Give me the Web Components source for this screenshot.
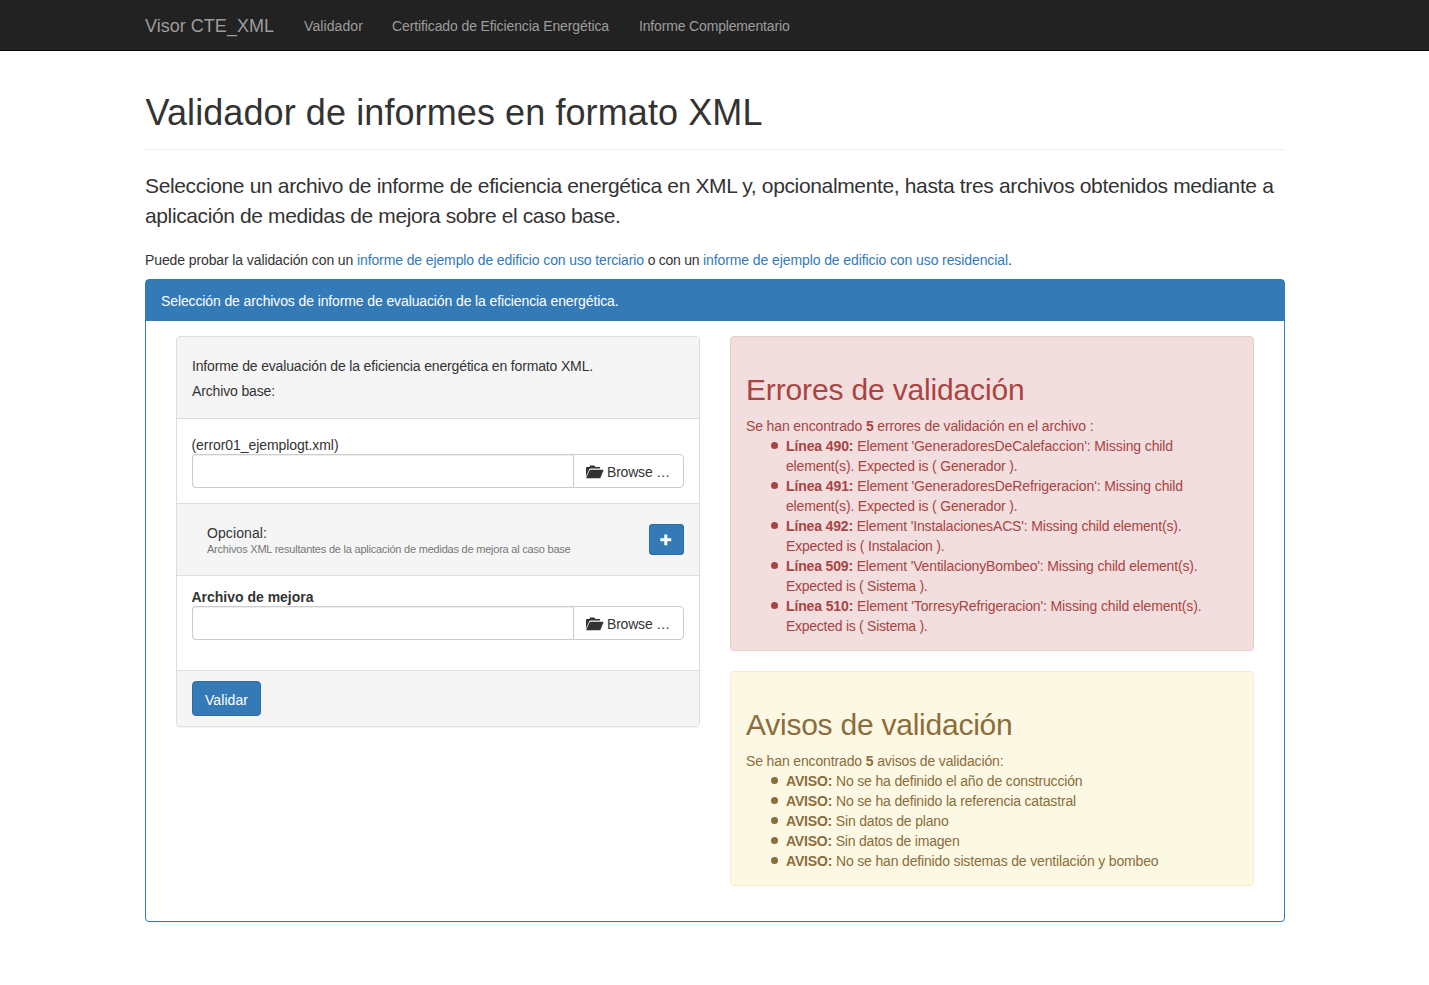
<!DOCTYPE html>
<html lang="es">
<head>
<meta charset="utf-8">
<title>Visor CTE_XML</title>
<style>
body{margin:0;background:#fff;color:#333;font:14px/20px "Liberation Sans",Arial,sans-serif}
</style>
</head>
<body>
<visor-app></visor-app>
<script>
const define=(name,html,init)=>customElements.define(name,class extends HTMLElement{
  constructor(){super();const t=document.createElement('template');t.innerHTML=html;
    this.attachShadow({mode:'open'}).append(t.content.cloneNode(true));}
  connectedCallback(){if(init)init(this,this.shadowRoot);}
});

/* One line of text, tracked so that it takes the width w */
define('text-line',`<style>:host{display:inline-block;white-space:pre;vertical-align:top}</style><slot></slot>`,
(el)=>{
  const w=parseFloat(el.getAttribute('w'));
  if(!w)return;
  el.style.letterSpacing='0';
  const nat=el.getBoundingClientRect().width;
  if(nat)el.style.letterSpacing=((w-nat)/el.textContent.length).toFixed(4)+'px';
});

define('nav-bar',`<style>
:host{display:block;background:#222;border-bottom:1px solid #080808;height:50px;color:#9d9d9d}
nav{width:1139px;margin:0 auto;display:flex;height:50px;align-items:flex-start;padding-top:16px;box-sizing:border-box}
.brand{font-size:18px;margin-right:30px}
.item{margin-right:29px}
</style><nav>
<text-line class="brand" w="129">Visor CTE_XML</text-line>
<text-line class="item" w="59">Validador</text-line>
<text-line class="item" w="217" style="margin-right:30px">Certificado de Eficiencia Energética</text-line>
<text-line w="150.5">Informe Complementario</text-line>
</nav>`);

define('page-title',`<style>
:host{display:block;padding-bottom:16px;margin:42.4px 0 21px;border-bottom:1px solid #eee}
h1{margin:0 0 0 1px;font-size:36px;line-height:39.6px;font-weight:400}
</style><h1><slot></slot></h1>`);

define('folder-icon',`<style>:host{display:block;width:18px;height:14px}svg{display:block}</style>
<svg width="18" height="14" viewBox="0 0 18 14"><path fill="#333" d="M0 11.5V2.6Q0 2 .7 2H3.2L4 .8Q4.2.5 4.8.5H8Q8.5.5 8.8 1L9.3 2H13.4Q14.2 2 14.2 2.8V3.6H4.6Q3.6 3.6 3.2 4.5ZM4.8 4.7H17Q17.8 4.7 17.4 5.5L14.6 12.5Q14.3 13.2 13.5 13.2H.6Q0 13.2.3 12.4L3.5 5.5Q3.9 4.7 4.8 4.7Z"/></svg>`);

define('file-input',`<style>
:host{display:flex;height:34px}
.field{flex:1;border:1px solid #ccc;border-right:0;border-radius:4px 0 0 4px;box-shadow:inset 0 1px 1px rgba(0,0,0,.075)}
.btn{box-sizing:border-box;width:111px;border:1px solid #ccc;border-radius:0 4px 4px 0;display:flex;padding:7px 0 0 12px}
folder-icon{margin:3px 3.5px 0 0}
</style><div class="field"></div><div class="btn"><folder-icon></folder-icon><text-line w="63">Browse …</text-line></div>`);

define('upload-panel',`<style>
:host{display:block;box-sizing:border-box;border:1px solid #ddd;border-radius:4px;height:391px;box-shadow:0 1px 1px rgba(0,0,0,.05);overflow:hidden}
.grey{background:#f5f5f5;box-sizing:border-box}
.head{height:82px;border-bottom:1px solid #ddd;padding:19px 15px 0 15.5px}
.line{height:25px;display:flex}
.file{box-sizing:border-box;height:84px;padding:15px 15px 0}
.file .lab{height:20px;display:flex;padding-top:1px;box-sizing:border-box}
.opt{height:73px;border:solid #ddd;border-width:1px 0;padding:20px 15px 0 30.5px;display:flex;justify-content:space-between}
.opt .txt{display:flex;flex-direction:column;align-items:flex-start;margin-top:-1px}
.small{font-size:11px;line-height:14px;color:#777;margin-top:-1px}
.plus{box-sizing:border-box;width:35px;height:31px;background:#337ab7;border:1px solid #2e6da4;border-radius:3px;display:flex;align-items:center;justify-content:center}
.plus svg{margin-top:1px}
.better{box-sizing:border-box;height:94px;padding:11px 15px 0}
.better .lab{height:19px;display:flex;font-weight:700}
.foot{height:57px;border-top:1px solid #ddd;padding:10px 15px}
.go{box-sizing:border-box;width:69px;height:35px;background:#337ab7;border:1px solid #2e6da4;border-radius:4px;color:#fff;padding:8px 0 0 12.5px}
</style>
<div class="grey head"><div class="line"><text-line w="401">Informe de evaluación de la eficiencia energética en formato XML.</text-line></div><div class="line"><text-line w="83">Archivo base:</text-line></div></div>
<div class="file"><div class="lab"><text-line w="147">(error01_ejemplogt.xml)</text-line></div><file-input></file-input></div>
<div class="grey opt"><div class="txt"><text-line w="60">Opcional:</text-line><text-line class="small" w="363.5">Archivos XML resultantes de la aplicación de medidas de mejora al caso base</text-line></div>
<div class="plus"><svg width="12" height="12" viewBox="0 0 12 12"><path fill="#fff" d="M4.3.5H7.3V4.3H11.3V7.3H7.3V11.3H4.3V7.3H.3V4.3H4.3Z"/></svg></div></div>
<div class="better"><div class="lab"><text-line w="122">Archivo de mejora</text-line></div><file-input></file-input></div>
<div class="grey foot"><div class="go"><text-line w="43">Validar</text-line></div></div>`);

define('alert-box',`<style>
:host{display:block;box-sizing:border-box;border:1px solid #ebccd1;background:#f2dede;color:#a94442;border-radius:4px;padding:16px 15px 14px 15.5px;margin-bottom:20px}
:host([kind=warning]){border-color:#faebcc;background:#fcf8e3;color:#8a6d3b}
h2{margin:20px 0 10px;font-size:30px;line-height:33px;font-weight:400}
ul{margin:0;padding:0 0 0 40px;list-style:none}
</style><h2><slot name="title"></slot></h2><slot name="intro"></slot><ul><slot></slot></ul>`);

define('alert-item',`<style>
:host{display:flex;flex-direction:column;align-items:flex-start;position:relative}
:host::before{content:"";position:absolute;left:-15px;top:6px;width:7px;height:7px;border-radius:50%;background:currentColor}
</style><slot></slot>`);

define('main-panel',`<style>
:host{display:block;box-sizing:border-box;border:1px solid #337ab7;border-radius:4px;box-shadow:0 1px 1px rgba(0,0,0,.05);height:643px}
header{background:#337ab7;color:#fff;height:41px;box-sizing:border-box;padding:11px 15px 0 15.5px}
.body{display:grid;grid-template-columns:1fr 1fr;gap:30px;padding:15px 30px 0;align-items:start}
</style><header><text-line w="457.5">Selección de archivos de informe de evaluación de la eficiencia energética.</text-line></header>
<div class="body"><upload-panel></upload-panel><div>
<alert-box><text-line slot="title" w="278.5">Errores de validación</text-line>
<text-line slot="intro" w="347.5">Se han encontrado <b>5</b> errores de validación en el archivo :</text-line>
<alert-item><text-line w="387">​<b>Línea 490:</b> Element 'GeneradoresDeCalefaccion': Missing child</text-line><text-line w="231.5">element(s). Expected is ( Generador ).</text-line></alert-item>
<alert-item><text-line w="397"><b>Línea 491:</b> Element 'GeneradoresDeRefrigeracion': Missing child</text-line><text-line w="231.5">element(s). Expected is ( Generador ).</text-line></alert-item>
<alert-item><text-line w="395.5"><b>Línea 492:</b> Element 'InstalacionesACS': Missing child element(s).</text-line><text-line w="158.5">Expected is ( Instalacion ).</text-line></alert-item>
<alert-item><text-line w="411.5"><b>Línea 509:</b> Element 'VentilacionyBombeo': Missing child element(s).</text-line><text-line w="141.5">Expected is ( Sistema ).</text-line></alert-item>
<alert-item><text-line w="415.5"><b>Línea 510:</b> Element 'TorresyRefrigeracion': Missing child element(s).</text-line><text-line w="141.5">Expected is ( Sistema ).</text-line></alert-item>
</alert-box>
<alert-box kind="warning"><text-line slot="title" w="266.5">Avisos de validación</text-line>
<text-line slot="intro" w="257.5">Se han encontrado <b>5</b> avisos de validación:</text-line>
<alert-item><text-line w="296.5"><b>AVISO:</b> No se ha definido el año de construcción</text-line></alert-item>
<alert-item><text-line w="290"><b>AVISO:</b> No se ha definido la referencia catastral</text-line></alert-item>
<alert-item><text-line w="162.5"><b>AVISO:</b> Sin datos de plano</text-line></alert-item>
<alert-item><text-line w="173.5"><b>AVISO:</b> Sin datos de imagen</text-line></alert-item>
<alert-item><text-line w="372.5"><b>AVISO:</b> No se han definido sistemas de ventilación y bombeo</text-line></alert-item>
</alert-box></div></div>`.replace(/\u200b/g,''));

define('visor-app',`<style>
:host{display:block}
main{width:1140px;margin:0 auto;padding-bottom:60px}
.lead{font-size:21px;line-height:30px;margin:0 0 19px .5px;display:flex;flex-direction:column;align-items:flex-start}
.try{margin:0 0 9px .5px;display:flex}
.link{color:#337ab7}
</style><nav-bar></nav-bar><main>
<page-title><text-line w="617">Validador de informes en formato XML</text-line></page-title>
<p class="lead"><text-line w="1128.5">Seleccione un archivo de informe de eficiencia energética en XML y, opcionalmente, hasta tres archivos obtenidos mediante a</text-line><text-line w="475.5">aplicación de medidas de mejora sobre el caso base.</text-line></p>
<p class="try"><text-line w="212">Puede probar la validación con un </text-line><text-line class="link" w="287">informe de ejemplo de edificio con uso terciario</text-line><text-line w="59"> o con un </text-line><text-line class="link" w="305">informe de ejemplo de edificio con uso residencial</text-line>.</p>
<main-panel></main-panel>
</main>`);
</script>
</body>
</html>
